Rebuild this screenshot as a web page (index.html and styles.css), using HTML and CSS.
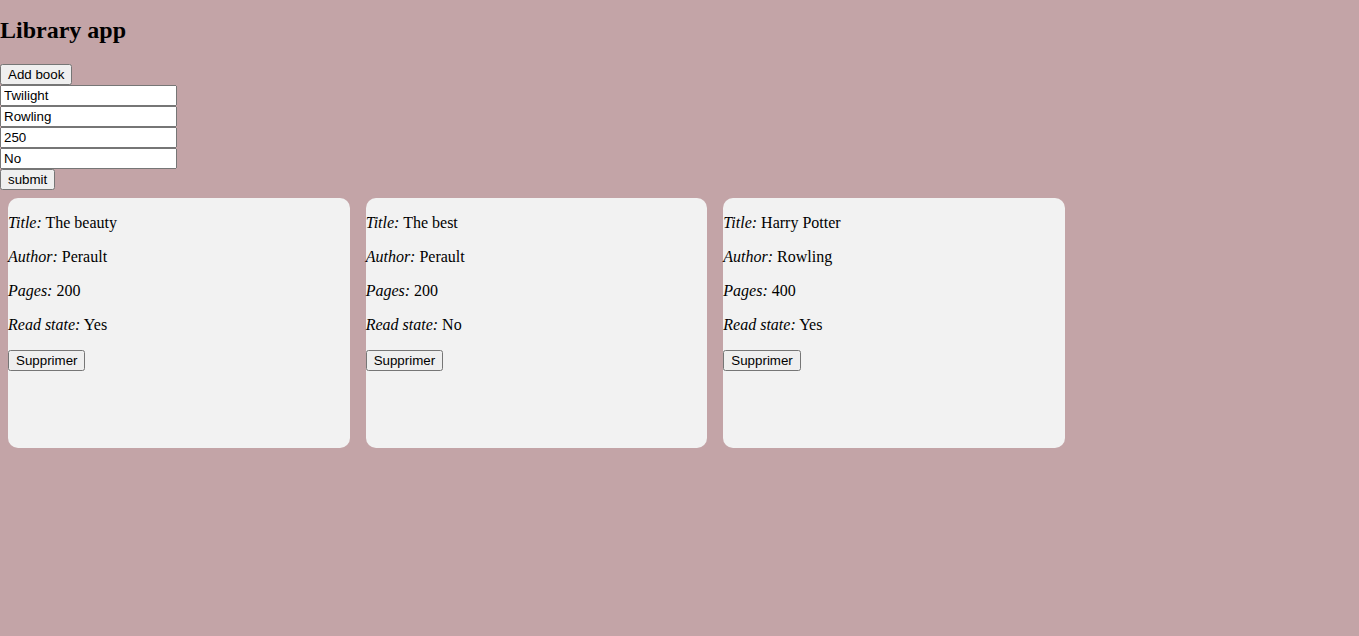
FILE: index.html
```html
<!DOCTYPE html>
<html lang="en">
<head>
<meta charset="utf-8">
<title>Library app</title>
<link rel="stylesheet" href="styles.css">
</head>
<body>
<header class="header">
  <h1 class="title">Library app</h1>
</header>
<form class="book-form">
  <button type="button" class="btn">Add book</button>
  <input class="field" type="text" value="Twilight">
  <input class="field" type="text" value="Rowling">
  <input class="field" type="text" value="250">
  <input class="field" type="text" value="No">
  <button type="button" class="btn">submit</button>
</form>
<main class="library">
  <div class="card">
    <p class="line"><em>Title:</em> The beauty</p>
    <p class="line"><em>Author:</em> Perault</p>
    <p class="line"><em>Pages:</em> 200</p>
    <p class="line"><em>Read state:</em> Yes</p>
    <button type="button" class="btn">Supprimer</button>
  </div>
  <div class="card">
    <p class="line"><em>Title:</em> The best</p>
    <p class="line"><em>Author:</em> Perault</p>
    <p class="line"><em>Pages:</em> 200</p>
    <p class="line"><em>Read state:</em> No</p>
    <button type="button" class="btn">Supprimer</button>
  </div>
  <div class="card">
    <p class="line"><em>Title:</em> Harry Potter</p>
    <p class="line"><em>Author:</em> Rowling</p>
    <p class="line"><em>Pages:</em> 400</p>
    <p class="line"><em>Read state:</em> Yes</p>
    <button type="button" class="btn">Supprimer</button>
  </div>
</main>
</body>
</html>
```
FILE: styles.css
```css
html, body {
  margin: 0;
  padding: 0;
}
body {
  background: #c3a4a7;
  font-family: "Liberation Serif", "Times New Roman", serif;
  font-size: 16px;
  color: #000;
}
.header {
  display: flow-root;
}
.title {
  font-size: 24px;
  font-weight: bold;
  margin: 17px 0 20px;
  line-height: normal;
}
.book-form {
  display: flex;
  flex-direction: column;
  align-items: flex-start;
}
.btn {
  font-family: "Liberation Sans", Arial, sans-serif;
  font-size: 13.333px;
  height: 21px;
  padding: 1px 6px;
}
.field {
  font-family: "Liberation Sans", Arial, sans-serif;
  font-size: 13.333px;
  width: 177px;
  height: 21px;
  box-sizing: border-box;
  padding: 1px 2px;
  margin: 0;
}
.library {
  display: grid;
  grid-template-columns: repeat(3, 341.67px);
  gap: 16px;
  padding: 8px;
}
.card {
  background: #f2f2f2;
  border-radius: 10px;
  height: 250px;
}
.line {
  margin: 16px 0;
}
```
